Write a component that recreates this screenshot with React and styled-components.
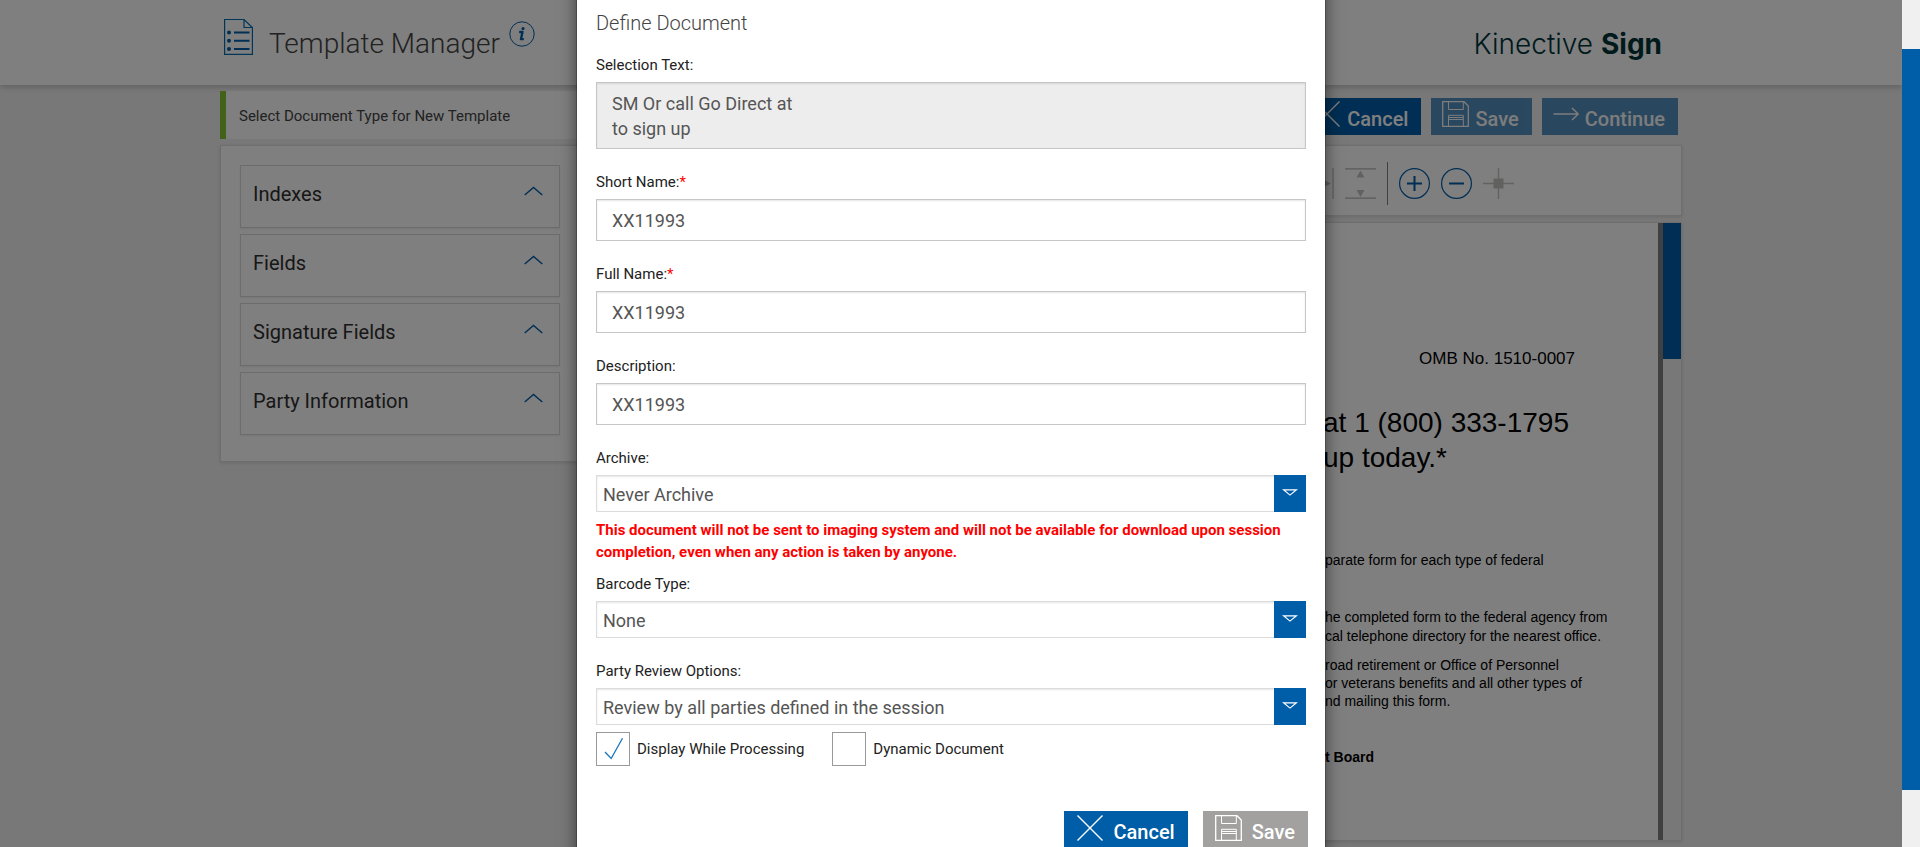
import React, { useId, useState } from 'react';
import styled, { createGlobalStyle, css } from 'styled-components';

const blue = '#005da8';

const GlobalStyle = createGlobalStyle`
  *, *::before, *::after { box-sizing: border-box; }
  body { margin: 0; font-family: Roboto, "Liberation Sans", sans-serif; color: #333; background: #f0f0f0; }
  h1, h2, h3, p { margin: 0; font-weight: 400; }
  button, input, select, textarea { font-family: inherit; margin: 0; }
  svg { display: block; flex: none; }
`;

/* ---------- page frame ---------- */

const Frame = styled.div`
  display: flex;
  height: 100vh;
  overflow: hidden;
`;

const Viewport = styled.div`
  position: relative;
  flex: 1;
  min-width: 0;
  overflow: hidden;
`;

const PageScrollbar = styled.div`
  display: flex;
  flex-direction: column;
  width: 18px;
  padding: 49px 0 57px;
  background: #f0f0f0;

  &::before { content: ''; flex: 1; background: ${blue}; }
`;

const Container = styled.div`
  width: 100%;
  max-width: 1462px;
  margin: 0 auto;
`;

const Header = styled.header`
  background: #fff;
  box-shadow: 0 2px 6px rgba(0, 0, 0, 0.2);
`;

const HeaderInner = styled(Container)`
  display: flex;
  align-items: flex-start;
  height: 85px;
  padding: 18px 20px 0 4px;
`;

const PageTitle = styled.h1`
  margin: 8px 9px 0 16px;
  font-size: 28px;
  line-height: 36px;
  font-weight: 300;
  color: #444;
`;

const InfoButton = styled.button`
  width: 26px;
  height: 26px;
  margin-top: 3px;
  padding: 0;
  border: 0;
  background: none;
`;

const Brand = styled.div`
  margin: 8px 0 0 auto;
  font-family: Inter, sans-serif;
  font-size: 28px;
  line-height: 36px;
  font-weight: 300;
  color: #003538;

  strong { font-weight: 700; }
`;

/* ---------- action row ---------- */

const ActionRow = styled(Container)`
  display: flex;
  align-items: center;
  gap: 10px;
  margin-top: 6px;
  padding-right: 4px;
`;

const Notice = styled.p`
  flex: 1;
  padding: 2px 0 0 13px;
  border-left: 6px solid #86c232;
  background: #fff;
  font-size: 15px;
  line-height: 46px;
  color: #444;
`;

const Actions = styled.div`
  display: flex;
  gap: 10px;
  padding-top: 2px;
`;

const Button = styled.button`
  display: flex;
  align-items: center;
  gap: ${(p) => (p.$roomy ? '10px' : '6px')};
  height: 37px;
  padding: ${(p) => (p.$roomy ? '0 13px 0 12px' : '0 13px 0 11px')};
  border: 0;
  background: ${(p) => (p.$muted ? '#a2a19f' : blue)};
  color: #fff;
  font-size: 20px;
  line-height: 24px;
  font-weight: 500;

  svg { margin-bottom: 4px; }
  span { padding-top: 5px; }
  ${(p) => p.$faded && css`opacity: 0.65;`}
`;

/* ---------- workspace ---------- */

const Workspace = styled(Container)`
  display: grid;
  grid-template-columns: 400px 1fr;
  align-items: start;
  margin-top: 6px;
`;

const Panel = styled.section`
  border: 1px solid #dcdcdc;
  background: #fff;
  box-shadow: 0 1px 3px rgba(0, 0, 0, 0.12);
`;

const SidePanel = styled(Panel)`
  display: flex;
  flex-direction: column;
  gap: 6px;
  padding: 19px 59px 26px 19px;
`;

const Accordion = styled.button`
  display: flex;
  justify-content: space-between;
  align-items: flex-start;
  height: 63px;
  padding: 16px 16px 0 12px;
  border: 1px solid #d8d8d8;
  background: #fff;
  box-shadow: 0 1px 2px rgba(0, 0, 0, 0.08);
  font-size: 20px;
  line-height: 24px;
  color: #2e2e2e;

  svg { margin-top: 4px; }
`;

const MainColumn = styled.div`
  display: flex;
  flex-direction: column;
  gap: 6px;
`;

const Toolbar = styled(Panel)`
  display: flex;
  justify-content: flex-end;
  align-items: center;
  gap: 11px;
  height: 71px;
  padding: 6px 167px 0 0;
`;

const ToolButton = styled.button`
  width: 31px;
  height: 31px;
  padding: 0;
  border: 0;
  background: none;
`;

const ToolDivider = styled.span`
  width: 1px;
  height: 43px;
  background: #808080;
`;

const Viewer = styled(Panel)`
  display: flex;
  height: 619px;
`;

const Sheet = styled.div`
  flex: 1;
  display: flex;
  flex-direction: column;
  align-items: flex-start;
  padding: 126px 0 0 702px;
  font-family: "Liberation Sans", Arial, sans-serif;
  color: #000;
  white-space: nowrap;
`;

const SheetHead = styled.div`
  display: flex;
  flex-direction: column;
  width: 252px;
  margin-bottom: 76px;
`;

const FormNumber = styled.p`
  align-self: flex-end;
  margin-bottom: 36px;
  font-size: 17px;
  line-height: 20px;
`;

const CallOut = styled.p`
  font-size: 28px;
  line-height: 35px;
`;

const Paragraph = styled.p`
  margin-bottom: ${(p) => p.$after || 0}px;
  padding-left: 2px;
  font-size: 14px;
  line-height: ${(p) => (p.$tight ? 18 : 19)}px;
  font-weight: ${(p) => (p.$strong ? 700 : 400)};
`;

const SheetEdge = styled.div`
  width: 5px;
  background: #808080;
`;

const ViewerScrollbar = styled.div`
  width: 18px;
  background: #f0f0f0;

  &::before { content: ''; display: block; height: 136px; background: ${blue}; }
`;

/* ---------- dialog ---------- */

const Backdrop = styled.div`
  position: absolute;
  inset: 0;
  overflow: hidden;
  background: rgba(0, 0, 0, 0.5);
`;

const Dialog = styled.form`
  width: 100%;
  max-width: 750px;
  margin: -30px auto 0;
  padding: 38px 17px 30px 19px;
  border: 1px solid rgba(0, 0, 0, 0.2);
  background: #fff;
  background-clip: padding-box;
  box-shadow: 0 5px 15px rgba(0, 0, 0, 0.5);
`;

const DialogTitle = styled.h2`
  margin-bottom: 17px;
  font-size: 20px;
  line-height: 28px;
  font-weight: 300;
  color: #444;
`;

const DialogBody = styled.div`
  padding-right: 2px;
`;

const Field = styled.div`
  display: flex;
  flex-direction: column;
  gap: 6px;
  margin-bottom: ${(p) => (p.$snug ? '7px' : '22px')};
`;

const Label = styled.label`
  font-size: 15px;
  line-height: 22px;
  color: #222;
`;

const Required = styled.span`
  color: #f00;
`;

const control = css`
  display: block;
  width: 100%;
  border: 1px solid #c6c6c6;
  border-radius: 0;
  background: #fff;
  box-shadow: inset 0 1px 2px rgba(0, 0, 0, 0.1);
  color: #555;
  font-size: 18px;
`;

const TextInput = styled.input`
  ${control}
  height: 42px;
  padding: 0 15px;
`;

const TextArea = styled.textarea`
  ${control}
  height: 67px;
  padding: 8px 15px;
  background: #ededed;
  line-height: 25px;
  resize: none;
`;

const SelectBox = styled.div`
  position: relative;
`;

const Select = styled.select`
  ${control}
  appearance: none;
  height: 37px;
  padding: 2px 38px 0 6px;
  border-color: #dcdcdc;
`;

const SelectArrow = styled.span`
  position: absolute;
  top: 0;
  right: 0;
  bottom: 0;
  display: flex;
  align-items: center;
  justify-content: center;
  width: 32px;
  padding-bottom: 2px;
  background: ${blue};
  pointer-events: none;
`;

const Warning = styled.p`
  margin-bottom: 10px;
  font-size: 15px;
  line-height: 22px;
  font-weight: 700;
  color: #f00;
`;

const CheckRow = styled.div`
  display: flex;
  gap: 28px;
`;

const CheckLabel = styled.label`
  display: flex;
  align-items: center;
  gap: 7px;
  font-size: 15px;
  line-height: 34px;
  color: #222;
`;

const CheckBox = styled.span`
  position: relative;
  width: 34px;
  height: 34px;

  input {
    display: block;
    appearance: none;
    width: 34px;
    height: 34px;
    border: 1px solid #999;
    background: #fff;
  }

  svg { position: absolute; inset: 0; pointer-events: none; }
  input:not(:checked) + svg { display: none; }
`;

const DialogFooter = styled.footer`
  display: flex;
  justify-content: flex-end;
  gap: 15px;
  margin-top: 45px;
`;

/* ---------- icons ---------- */

const CloseIcon = () => (
  <svg width="28" height="26" viewBox="0 0 28 26" fill="none" stroke="#fff" strokeWidth="1.4" aria-hidden="true">
    <path d="M1.5 .5 26.5 25.5M26.5 .5 1.5 25.5" />
  </svg>
);

const SaveIcon = () => (
  <svg width="27" height="26" viewBox="0 0 27 26" fill="none" stroke="#fff" strokeWidth="1" aria-hidden="true">
    <path d="M.7 .7H22L26.3 5V25.3H.7Z" strokeWidth="1.3" />
    <path d="M6.5 .7V8.5H21.3V.7M6.5 25.3V14.3H21.3V25.3M7 16.5H21M7 18.5H21" />
  </svg>
);

const ArrowIcon = () => (
  <svg width="26" height="26" viewBox="0 0 26 26" fill="none" stroke="#fff" strokeWidth="1.5" aria-hidden="true">
    <path d="M.5 13H25M19 7 25.2 13 19 19" />
  </svg>
);

const DocumentIcon = () => (
  <svg width="29" height="37" viewBox="0 0 29 37" fill="none" stroke="#006cb0" strokeWidth="1.2" aria-hidden="true">
    <path d="M.6 1.5H20L28.4 9.5V36.4H.6ZM20 1.5V9.5H28.4" />
    <path d="M10 14.5H25.5M10 22.8H25.5M10 31H25.5" stroke={blue} strokeWidth="2" />
    <g fill={blue} stroke="none">
      <circle cx="5" cy="14.5" r="2" />
      <circle cx="5" cy="22.8" r="2" />
      <circle cx="5" cy="31" r="2" />
    </g>
  </svg>
);

const InfoIcon = () => (
  <svg width="26" height="26" viewBox="0 0 26 26" fill="none" stroke={blue} aria-hidden="true">
    <circle cx="13" cy="13" r="12.2" strokeWidth="1" />
    <path d="M10.2 11H13.5L11.9 18.2H14.8" strokeWidth="2.3" strokeLinejoin="round" />
    <circle cx="14" cy="7.6" r="1.6" fill={blue} stroke="none" />
  </svg>
);

const ChevronIcon = () => (
  <svg width="19" height="10" viewBox="0 0 19 10" fill="none" stroke={blue} strokeWidth="1.4" aria-hidden="true">
    <path d="M.7 9 9.5 1.4 18.3 9" />
  </svg>
);

const DropIcon = () => (
  <svg width="16" height="7" viewBox="0 0 16 7" fill="none" stroke="#fff" strokeWidth="1.2" aria-hidden="true">
    <path d="M1.5 .8H14.5L8 6.1Z" />
  </svg>
);

const TickIcon = () => (
  <svg width="34" height="34" viewBox="0 0 34 34" fill="none" stroke="#1a75bc" strokeWidth="1.3" aria-hidden="true">
    <path d="M9 20 15.2 26.5 26.5 6.2" />
  </svg>
);

const FitWidthIcon = () => (
  <svg width="31" height="31" viewBox="0 0 31 31" aria-hidden="true">
    <path d="M1 0V31M30 0V31" stroke="#c8c8cc" strokeWidth="1.5" />
    <path d="M3 15.5 10 12V19ZM28 15.5 21 12V19Z" fill="#bbb" />
  </svg>
);

const FitHeightIcon = () => (
  <svg width="31" height="31" viewBox="0 0 31 31" aria-hidden="true">
    <path d="M0 .8H31M0 30.2H31" stroke="#b4b4b4" strokeWidth="1.2" />
    <path d="M15.5 2.5 19.5 9.5H11.5ZM15.5 29 19.5 22H11.5Z" fill="#c2c2c2" />
  </svg>
);

const ZoomIcon = ({ plus }) => (
  <svg width="31" height="31" viewBox="0 0 31 31" fill="none" stroke={blue} aria-hidden="true">
    <circle cx="15.5" cy="15.5" r="14.9" strokeWidth="1.2" />
    <path d={plus ? 'M8 15.5H23M15.5 8V23' : 'M8 15.5H23'} strokeWidth="2" />
  </svg>
);

const CenterIcon = () => (
  <svg width="31" height="31" viewBox="0 0 31 31" aria-hidden="true">
    <path d="M0 15.5H31M15.5 0V31" stroke="#c4c4c4" strokeWidth="1.4" />
    <rect x="10.5" y="10.5" width="10" height="10" fill="#c2c2be" />
  </svg>
);

/* ---------- composed parts ---------- */

const panels = ['Indexes', 'Fields', 'Signature Fields', 'Party Information'];

function TextField({ label, required, initial }) {
  const id = useId();
  return (
    <Field>
      <Label htmlFor={id}>{label}{required && <Required>*</Required>}</Label>
      <TextInput id={id} defaultValue={initial} required={required} />
    </Field>
  );
}

function SelectField({ label, option, snug }) {
  const id = useId();
  return (
    <Field $snug={snug}>
      <Label htmlFor={id}>{label}</Label>
      <SelectBox>
        <Select id={id}><option>{option}</option></Select>
        <SelectArrow><DropIcon /></SelectArrow>
      </SelectBox>
    </Field>
  );
}

function Check({ label, initial = false }) {
  const [on, setOn] = useState(initial);
  return (
    <CheckLabel>
      <CheckBox>
        <input type="checkbox" checked={on} onChange={(e) => setOn(e.target.checked)} />
        <TickIcon />
      </CheckBox>
      {label}
    </CheckLabel>
  );
}

function DefineDocument() {
  const id = useId();
  return (
    <Backdrop>
      <Dialog role="dialog" aria-labelledby={id} onSubmit={(e) => e.preventDefault()}>
        <DialogTitle id={id}>Define Document</DialogTitle>
        <DialogBody>
          <Field>
            <Label htmlFor={`${id}-selection`}>Selection Text:</Label>
            <TextArea id={`${id}-selection`} readOnly value={'SM Or call Go Direct at\nto sign up'} />
          </Field>
          <TextField label="Short Name:" required initial="XX11993" />
          <TextField label="Full Name:" required initial="XX11993" />
          <TextField label="Description:" initial="XX11993" />
          <SelectField label="Archive:" option="Never Archive" snug />
          <Warning>
            This document will not be sent to imaging system and will not be available for download
            upon session completion, even when any action is taken by anyone.
          </Warning>
          <SelectField label="Barcode Type:" option="None" />
          <SelectField label="Party Review Options:" option="Review by all parties defined in the session" snug />
          <CheckRow>
            <Check label="Display While Processing" initial />
            <Check label="Dynamic Document" />
          </CheckRow>
        </DialogBody>
        <DialogFooter>
          <Button type="button" $roomy><CloseIcon /><span>Cancel</span></Button>
          <Button type="submit" $roomy $muted><SaveIcon /><span>Save</span></Button>
        </DialogFooter>
      </Dialog>
    </Backdrop>
  );
}

function DocumentSheet() {
  return (
    <Sheet>
      <SheetHead>
        <FormNumber>OMB No. 1510-0007</FormNumber>
        <CallOut>at 1 (800) 333-1795</CallOut>
        <CallOut>up today.*</CallOut>
      </SheetHead>
      <Paragraph $after={38}>parate form for each type of federal</Paragraph>
      <Paragraph $after={10}>he completed form to the federal agency from<br />cal telephone directory for the nearest office.</Paragraph>
      <Paragraph $tight $after={38}>road retirement or Office of Personnel<br />or veterans benefits and all other types of<br />nd mailing this form.</Paragraph>
      <Paragraph $strong>t Board</Paragraph>
    </Sheet>
  );
}

export default function App() {
  return (
    <Frame>
      <GlobalStyle />
      <Viewport>
        <Header>
          <HeaderInner>
            <DocumentIcon />
            <PageTitle>Template Manager</PageTitle>
            <InfoButton aria-label="Information"><InfoIcon /></InfoButton>
            <Brand>Kinective <strong>Sign</strong></Brand>
          </HeaderInner>
        </Header>
        <ActionRow>
          <Notice>Select Document Type for New Template</Notice>
          <Actions>
            <Button><CloseIcon /><span>Cancel</span></Button>
            <Button $faded><SaveIcon /><span>Save</span></Button>
            <Button $faded><ArrowIcon /><span>Continue</span></Button>
          </Actions>
        </ActionRow>
        <Workspace as="main">
          <SidePanel>
            {panels.map((name) => (
              <Accordion key={name} aria-expanded="false">{name}<ChevronIcon /></Accordion>
            ))}
          </SidePanel>
          <MainColumn>
            <Toolbar>
              <ToolButton aria-label="Fit width"><FitWidthIcon /></ToolButton>
              <ToolButton aria-label="Fit height"><FitHeightIcon /></ToolButton>
              <ToolDivider />
              <ToolButton aria-label="Zoom in"><ZoomIcon plus /></ToolButton>
              <ToolButton aria-label="Zoom out"><ZoomIcon /></ToolButton>
              <ToolButton aria-label="Center"><CenterIcon /></ToolButton>
            </Toolbar>
            <Viewer>
              <DocumentSheet />
              <SheetEdge />
              <ViewerScrollbar />
            </Viewer>
          </MainColumn>
        </Workspace>
        <DefineDocument />
      </Viewport>
      <PageScrollbar />
    </Frame>
  );
}
